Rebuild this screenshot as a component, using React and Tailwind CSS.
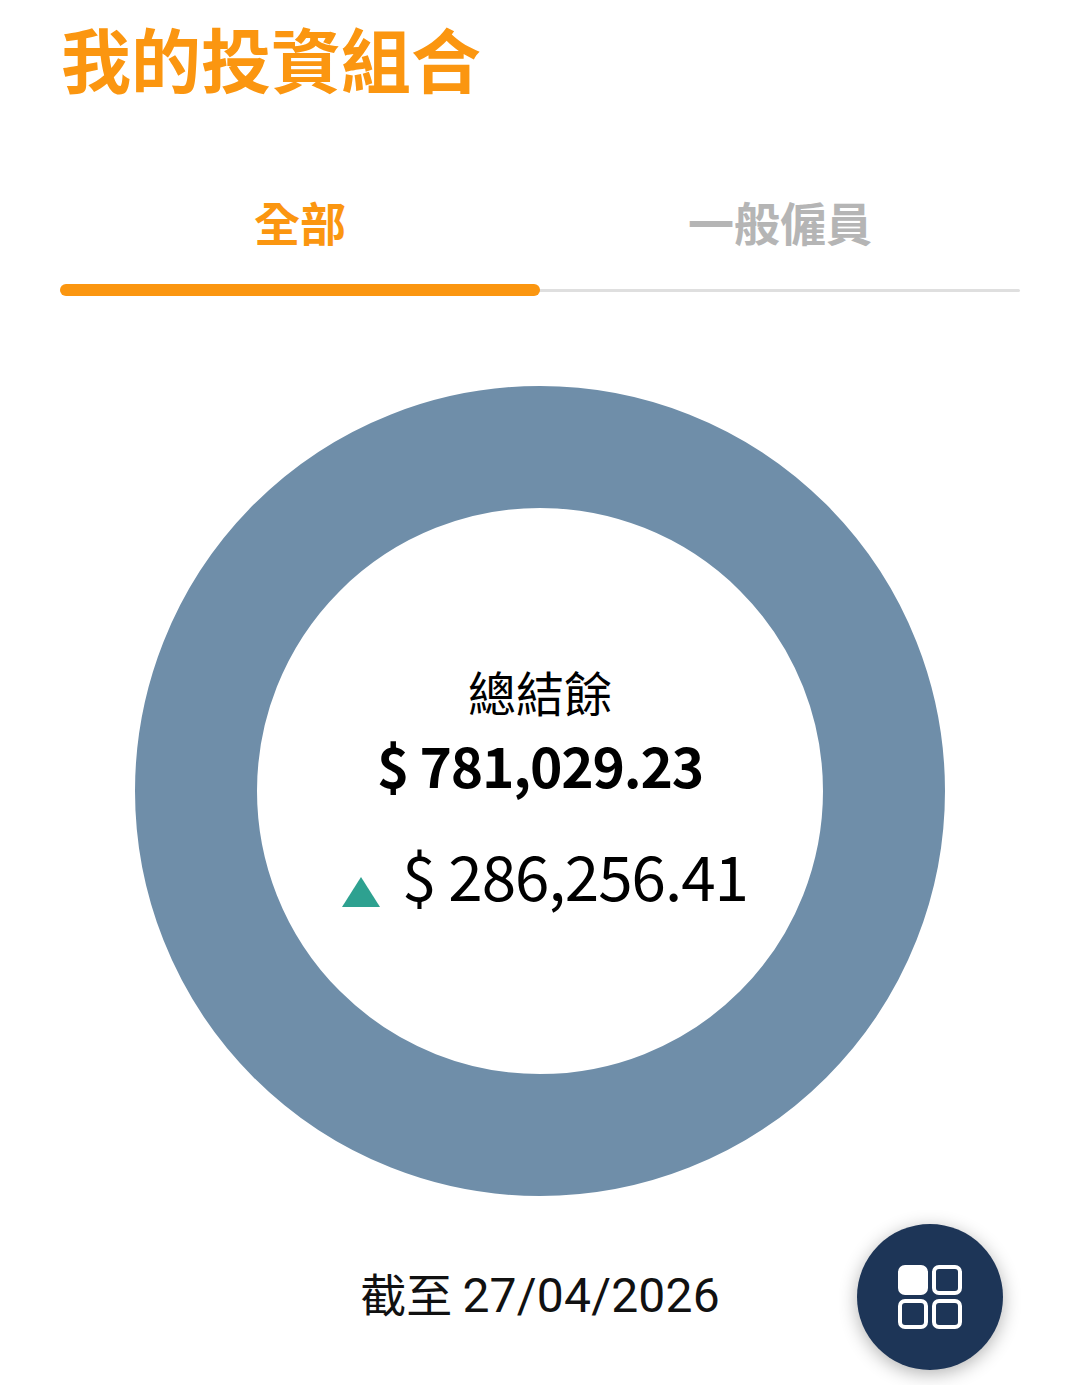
const font = { fontFamily: '"Noto Sans CJK TC", "Noto Sans", sans-serif' };

function DonutChart() {
  return (
    <svg width="810" height="810" viewBox="0 0 810 810">
      <circle cx="405" cy="405" r="344" fill="none" stroke="#6f8ea9" strokeWidth="122" />
    </svg>
  );
}

function GridIcon() {
  return (
    <svg width="64" height="64" viewBox="0 0 64 64" fill="none" stroke="#fff" strokeWidth="4">
      <rect x="2" y="2" width="26" height="26" rx="5" fill="#fff" />
      <rect x="36" y="2" width="26" height="26" rx="5" />
      <rect x="2" y="36" width="26" height="26" rx="5" />
      <rect x="36" y="36" width="26" height="26" rx="5" />
    </svg>
  );
}

export default function App() {
  return (
    <div className="w-[1080px] h-[1385px] bg-white overflow-hidden px-[60px]" style={font}>
      <h1 className="text-[70px] leading-[70px] font-bold text-[#fb9610] pt-[23px] pl-[1px] h-[95px]">我的投資組合</h1>

      <div className="mt-[88px] relative">
        <div className="flex h-[118px]">
          <div className="w-1/2 text-center text-[46px] leading-[76px] font-bold text-[#fb9610]">全部</div>
          <div className="w-1/2 text-center text-[46px] leading-[76px] font-bold text-[#b5b5b5]">一般僱員</div>
        </div>
        <div className="absolute left-0 right-0 top-[106px] h-[3px] rounded-full bg-[#dfdfdf]" />
        <div className="absolute left-0 top-[101px] w-[480px] h-[12px] rounded-full bg-[#fb9610]" />
      </div>

      <div className="relative mt-[85px] w-[810px] h-[810px] mx-auto">
        <DonutChart />
        <div className="absolute inset-0 flex flex-col items-center text-black">
          <div className="mt-[275px] text-[48px] leading-[60px]">總結餘</div>
          <div className="mt-[11px] text-[55px] leading-[64px] font-semibold tracking-[-1.2px]">$ 781,029.23</div>
          <div className="mt-[45px] flex items-end ml-[9px]">
            <svg width="40" height="32" viewBox="0 0 40 32" className="mb-[-1px] mr-[21px]">
              <polygon points="20,1 39,31 1,31" fill="#2ea190" />
            </svg>
            <span className="text-[62px] leading-[66px] tracking-[-1px]">$ 286,256.41</span>
          </div>
        </div>
      </div>

      <div className="relative mt-[63px] text-center text-[46px] leading-[66px] text-[#111]">
        截至 <span className="text-[48px] tracking-[0.2px]" style={{ fontFamily: 'Roboto, sans-serif' }}>27/04/2026</span>
        <div className="absolute left-[797px] top-[-35px] w-[146px] h-[146px] rounded-full bg-[#1d3557] shadow-[0_4px_18px_rgba(0,0,0,0.3)] flex items-center justify-center">
          <GridIcon />
        </div>
      </div>
    </div>
  );
}
